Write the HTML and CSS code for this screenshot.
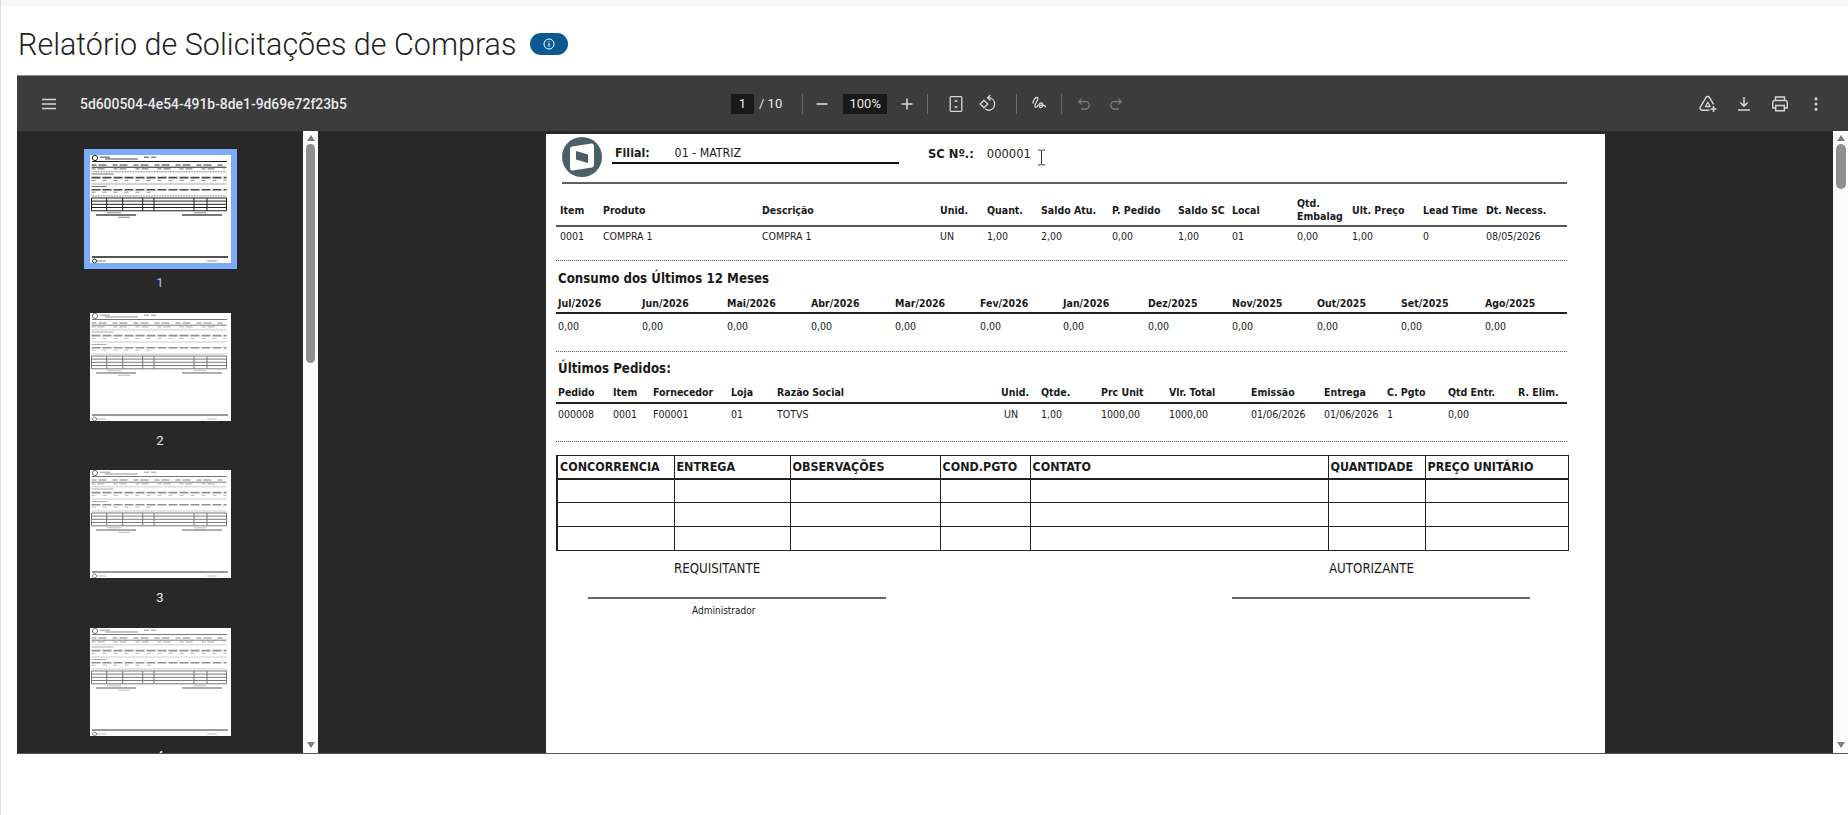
FILE: index.html
```html
<!DOCTYPE html>
<html lang="pt-BR">
<head>
    <meta charset="UTF-8">
    <meta name="viewport" content="width=device-width, initial-scale=1.0">
    <title>Relatório de Solicitações de Compras</title>
    <link rel="stylesheet" href="styles.css">
</head>
<body>
    <svg class="defs" width="0" height="0">
        <symbol id="mini-page" viewBox="0 0 141 108">
            <circle cx="5" cy="3" r="2.6" fill="none" stroke="currentColor" stroke-width="1"/>
            <g fill="none" stroke="currentColor">
                <path d="M10 2.2h10M15 4h33M54 2.2h5M61 2.2h5" stroke-width="1" opacity=".8"/>
                <path d="M2 6.5h135M1.5 12.2h135" stroke-width="1"/>
                <path d="M1.5 10h133" stroke-width="1.4" stroke-dasharray="5 2 8 6" opacity=".6"/>
                <path d="M1.5 13.8h133" stroke-width="1.2" stroke-dasharray="4 2 7 9" opacity=".5"/>
                <path d="M1.5 16.8h135M1.5 29h135M1.5 41h135" stroke-width="1" stroke-dasharray="1 .6" opacity=".6"/>
                <path d="M1.5 19h22M1.5 31.5h15" stroke-width="1.2" opacity=".6"/>
                <path d="M1.5 22.6h135M1.5 34.8h135" stroke-width="1.6" stroke-dasharray="9 2" opacity=".8"/>
                <path d="M1.5 25.4h135M1.5 37.2h60" stroke-width="1" stroke-dasharray="4 7" opacity=".5"/>
                <path d="M1.5 43h135v12.8H1.5zM1.5 46.1h135M1.5 49.3h135M1.5 52.5h135M16.7 43v12.8M32.7 43v12.8M52.7 43v12.8M64 43v12.8M104 43v12.8M117 43v12.8" stroke-width="1"/>
                <path d="M17 57.8h14M104 57.8h12M28 62.3h12" stroke-width="1" opacity=".5"/>
                <path d="M6 60h40M92 60h40" stroke-width="1.3" opacity=".8"/>
                <path d="M2 102h136" stroke-width="1.3"/>
                <path d="M6 106h10M117 106h10" stroke-width="1" opacity=".5"/>
            </g>
            <circle cx="4.5" cy="106" r="2" fill="none" stroke="currentColor" stroke-width=".9"/>
        </symbol>
    </svg>

    <h1 class="page-title">
        Relatório de Solicitações de Compras
        <span class="info-badge">
            <svg width="12" height="12" viewBox="0 0 12 12"><circle cx="6" cy="6" r="5" fill="none" stroke="#fff" stroke-width="1"/><path d="M6 5.3v3.3M6 3.2v1" stroke="#fff" stroke-width="1.2"/></svg>
        </span>
    </h1>

    <div class="viewer">
        <div class="toolbar">
            <div class="tb-left">
                <button class="tb-btn tb-menu">
                    <svg width="18" height="18" viewBox="0 0 18 18"><path d="M2 4.5h14M2 9h14M2 13.5h14" stroke="#d5d7da" stroke-width="1.5"/></svg>
                </button>
                <span class="file-name">5d600504-4e54-491b-8de1-9d69e72f23b5</span>
            </div>
            <div class="tb-center">
                <span class="tb-input page-input">1</span>
                <span class="page-count">/ 10</span>
                <span class="tb-sep sep-pages"></span>
                <button class="tb-btn">
                    <svg width="18" height="18" viewBox="0 0 18 18"><path d="M3.5 9h11" stroke="#d5d7da" stroke-width="1.6"/></svg>
                </button>
                <span class="tb-input zoom-input">100%</span>
                <button class="tb-btn">
                    <svg width="18" height="18" viewBox="0 0 18 18"><path d="M3.5 9h11M9 3.5v11" stroke="#d5d7da" stroke-width="1.6"/></svg>
                </button>
                <span class="tb-sep"></span>
                <button class="tb-btn tb-gap">
                    <svg width="18" height="20" viewBox="0 0 18 20"><rect x="3.2" y="2.7" width="11.6" height="14.6" rx="1" fill="none" stroke="#d5d7da" stroke-width="1.3"/><path d="M9 5.5l2 2.3H7zM9 14.5l2-2.3H7z" fill="#d5d7da"/></svg>
                </button>
                <button class="tb-btn">
                    <svg width="20" height="20" viewBox="0 0 20 20"><path d="M6 6.2l3.800 3.800L6 13.800 2.200 10z" fill="none" stroke="#d5d7da" stroke-width="1.3"/><path d="M9.500 3.700H11a6.400 6.400 0 0 1 0 12.700c-1.500 0-2.700-.5-3.700-1.300" fill="none" stroke="#d5d7da" stroke-width="1.3"/><path d="M12.500 1l-3 2.700 3 2.800" fill="none" stroke="#d5d7da" stroke-width="1.3"/></svg>
                </button>
                <span class="tb-sep sep-tools"></span>
                <button class="tb-btn tb-gap-sm">
                    <svg width="18" height="18" viewBox="0 0 18 18"><path d="M3 8c0-2 2-5.500 3.800-5.500 2 0 1 2.500-.3 4.500-1.200 2-2.300 4.500-1 5.300 1.600.9 3.300-4 5.300-4.300 2-.2 2.700 2 1.700 3.500-1 1.500-2.800 1.500-3 .2-.2-1.300 2-2 3.800-1.500 1 .3 1.700 1 2.200 1.500" fill="none" stroke="#d5d7da" stroke-width="1.3" stroke-linecap="round"/></svg>
                </button>
                <span class="tb-sep sep-draw"></span>
                <button class="tb-btn tb-gap-sm">
                    <svg width="18" height="18" viewBox="0 0 18 18"><path d="M4 6.500h6.500a3.700 3.700 0 0 1 0 7.500H6M6.700 3.500l-3 3 3 3" fill="none" stroke="#76787b" stroke-width="1.4"/></svg>
                </button>
                <button class="tb-btn">
                    <svg width="18" height="18" viewBox="0 0 18 18"><path d="M14 6.500H7.500a3.700 3.700 0 0 0 0 7.500H12M11.300 3.500l3 3-3 3" fill="none" stroke="#76787b" stroke-width="1.4"/></svg>
                </button>
            </div>
            <div class="tb-right">
                <button class="tb-btn wide">
                    <svg width="20" height="20" viewBox="0 0 20 20"><path d="M11.500 16.300H4.200c-1.700 0-2.700-1.800-1.900-3.200l5.600-9.500c.8-1.400 2.900-1.400 3.700 0l4 6.800" fill="none" stroke="#d5d7da" stroke-width="1.4" stroke-linejoin="round"/><path d="M9.800 8.300l2.300 4.200H7.500z" fill="none" stroke="#d5d7da" stroke-width="1.3" stroke-linejoin="round"/><path d="M15.500 12v6M12.500 15h6" stroke="#d5d7da" stroke-width="1.5"/></svg>
                </button>
                <button class="tb-btn wide">
                    <svg width="18" height="18" viewBox="0 0 18 18"><path d="M9 2v9M5.300 7.500L9 11.200l3.700-3.700M3 15h12" fill="none" stroke="#d5d7da" stroke-width="1.5"/></svg>
                </button>
                <button class="tb-btn wide">
                    <svg width="20" height="20" viewBox="0 0 20 20"><path d="M5.500 6.500V3h9v3.500M5.500 14H2.800V8.500c0-1.100.9-2 2-2h10.400c1.100 0 2 .9 2 2V14h-2.700" fill="none" stroke="#d5d7da" stroke-width="1.4"/><path d="M5.700 11.500h8.600v5.300H5.700z" fill="none" stroke="#d5d7da" stroke-width="1.4"/></svg>
                </button>
                <button class="tb-btn wide">
                    <svg width="18" height="18" viewBox="0 0 18 18"><circle cx="9" cy="3.800" r="1.500" fill="#d5d7da"/><circle cx="9" cy="9" r="1.500" fill="#d5d7da"/><circle cx="9" cy="14.200" r="1.500" fill="#d5d7da"/></svg>
                </button>
            </div>
        </div>

        <div class="viewer-body">
            <aside class="thumbs">
                <div class="thumb selected">
                    <svg class="thumb-page" viewBox="0 0 141 108"><use href="#mini-page"/></svg>
                    <span class="thumb-num">1</span>
                </div>
                <div class="thumb">
                    <svg class="thumb-page" viewBox="0 0 141 108"><use href="#mini-page"/></svg>
                    <span class="thumb-num">2</span>
                </div>
                <div class="thumb">
                    <svg class="thumb-page" viewBox="0 0 141 108"><use href="#mini-page"/></svg>
                    <span class="thumb-num">3</span>
                </div>
                <div class="thumb">
                    <svg class="thumb-page" viewBox="0 0 141 108"><use href="#mini-page"/></svg>
                    <span class="thumb-num">4</span>
                </div>
            </aside>
            <div class="scrollbar">
                <span class="arrow-up"></span>
                <span class="scroll-thumb thumbs-scroll"></span>
                <span class="arrow-down"></span>
            </div>

            <main class="doc-area">
                <div class="doc-page">
                    <div class="rep-head">
                        <svg class="logo" width="40" height="40" viewBox="0 0 40 40">
                            <circle cx="20" cy="20" r="20" fill="#4a5f68"/>
                            <path d="M8 12q0-2 2-2.400L29.500 6.500q2.500-.4 2.500 2.500v19q0 2-2 2.400L10.500 33.500Q8 34 8 31z" fill="#fff"/>
                            <path d="M14 14l12 3.500v8.500l-12-3.500z" fill="#4a5f68"/>
                        </svg>
                        <div class="branch">
                            <b>Filial:</b>
                            <span>01 - MATRIZ</span>
                        </div>
                        <div class="sc-number">
                            <b>SC Nº.:</b>
                            <span>000001</span>
                            <svg class="ibeam" width="9" height="17" viewBox="0 0 9 17"><path d="M1 1h2.500l1 1 1-1H8M4.500 2v13M1 16h2.500l1-1 1 1H8" fill="none" stroke="#333" stroke-width="1"/></svg>
                        </div>
                    </div>

                    <div class="row items-cols row-head items-head">
                        <b>Item</b><b>Produto</b><b>Descrição</b><b>Unid.</b><b>Quant.</b><b>Saldo Atu.</b><b>P. Pedido</b><b>Saldo SC</b><b>Local</b><b>Qtd.<br>Embalag</b><b>Ult. Preço</b><b>Lead Time</b><b>Dt. Necess.</b>
                    </div>
                    <div class="row items-cols row-data items-data">
                        <span>0001</span><span>COMPRA 1</span><span>COMPRA 1</span><span>UN</span><span>1,00</span><span>2,00</span><span>0,00</span><span>1,00</span><span>01</span><span>0,00</span><span>1,00</span><span>0</span><span>08/05/2026</span>
                    </div>

                    <h3 class="rep-title usage-title">Consumo dos Últimos 12 Meses</h3>
                    <div class="row usage-cols row-head usage-head">
                        <b>Jul/2026</b><b>Jun/2026</b><b>Mai/2026</b><b>Abr/2026</b><b>Mar/2026</b><b>Fev/2026</b><b>Jan/2026</b><b>Dez/2025</b><b>Nov/2025</b><b>Out/2025</b><b>Set/2025</b><b>Ago/2025</b>
                    </div>
                    <div class="row usage-cols row-data usage-data">
                        <span>0,00</span><span>0,00</span><span>0,00</span><span>0,00</span><span>0,00</span><span>0,00</span><span>0,00</span><span>0,00</span><span>0,00</span><span>0,00</span><span>0,00</span><span>0,00</span>
                    </div>

                    <h3 class="rep-title orders-title">Últimos Pedidos:</h3>
                    <div class="row orders-cols row-head orders-head">
                        <b>Pedido</b><b>Item</b><b>Fornecedor</b><b>Loja</b><b>Razão Social</b><b>Unid.</b><b>Qtde.</b><b>Prc Unit</b><b>Vlr. Total</b><b>Emissão</b><b>Entrega</b><b>C. Pgto</b><b>Qtd Entr.</b><b>R. Elim.</b>
                    </div>
                    <div class="row orders-cols row-data orders-data">
                        <span>000008</span><span>0001</span><span>F00001</span><span>01</span><span>TOTVS</span><span class="un">UN</span><span>1,00</span><span>1000,00</span><span>1000,00</span><span>01/06/2026</span><span>01/06/2026</span><span>1</span><span>0,00</span><span></span>
                    </div>

                    <table class="quote-table">
                        <colgroup>
                            <col class="c1"><col class="c2"><col class="c3"><col class="c4"><col class="c5"><col class="c6"><col class="c7">
                        </colgroup>
                        <thead>
                            <tr><th>CONCORRENCIA</th><th>ENTREGA</th><th>OBSERVAÇÕES</th><th>COND.PGTO</th><th>CONTATO</th><th>QUANTIDADE</th><th>PREÇO UNITÁRIO</th></tr>
                        </thead>
                        <tbody>
                            <tr><td></td><td></td><td></td><td></td><td></td><td></td><td></td></tr>
                            <tr><td></td><td></td><td></td><td></td><td></td><td></td><td></td></tr>
                            <tr><td></td><td></td><td></td><td></td><td></td><td></td><td></td></tr>
                        </tbody>
                    </table>

                    <div class="signatures">
                        <div class="sign sign-req">
                            <div class="sign-role">REQUISITANTE</div>
                            <div class="sign-line"></div>
                            <div class="sign-name">Administrador</div>
                        </div>
                        <div class="sign sign-auth">
                            <div class="sign-role">AUTORIZANTE</div>
                            <div class="sign-line"></div>
                        </div>
                    </div>
                </div>
            </main>
            <div class="scrollbar">
                <span class="arrow-up"></span>
                <span class="scroll-thumb doc-scroll"></span>
                <span class="arrow-down"></span>
            </div>
        </div>
    </div>
</body>
</html>
```

FILE: styles.css
```css
* {
    box-sizing: border-box;
}
html, body {
    height: 100%;
    overflow: hidden;
}
body {
    margin: 0;
    padding-top: 6px;
    background-color: #fff;
    border-left: 1px solid #ddd;
    font-family: Roboto, Arial, sans-serif;
}
body::before {
    content: "";
    display: block;
    height: 6px;
    margin-top: -6px;
    background-color: #f7f7f7;
}
.defs {
    display: block;
    height: 0;
}
.page-title {
    display: flex;
    align-items: center;
    height: 69px;
    margin: 0;
    padding: 7px 0 0 17px;
    font-family: Roboto, sans-serif;
    font-size: 30.5px;
    font-weight: 300;
    color: #222;
}
.info-badge {
    display: flex;
    align-items: center;
    justify-content: center;
    width: 38px;
    height: 22px;
    margin-left: 14px;
    border-radius: 11px;
    background-color: #0b5a91;
}
.viewer {
    height: 679px;
    margin-left: 16px;
    display: flex;
    flex-direction: column;
    border-bottom: 1px solid #555;
}
.toolbar {
    display: flex;
    align-items: center;
    height: 56px;
    flex-shrink: 0;
    background-color: #3c3c3c;
    border-top: 1px solid #8a8a8a;
}
.tb-left {
    display: flex;
    align-items: center;
    width: 714px;
    padding-left: 16px;
}
.tb-menu {
    margin-right: 15px;
}
.file-name {
    font-size: 13.9px;
    font-weight: 500;
    color: #e8eaed;
}
.tb-center {
    display: flex;
    align-items: center;
}
.tb-btn {
    display: flex;
    align-items: center;
    justify-content: center;
    width: 32px;
    height: 32px;
    padding: 0;
    border: none;
    background: none;
}
.tb-btn.wide {
    width: 36px;
}
.tb-input {
    display: flex;
    align-items: center;
    justify-content: center;
    height: 20px;
    background-color: #191919;
    font-size: 13px;
    color: #e8eaed;
}
.page-input {
    width: 23px;
}
.page-count {
    margin-left: 5px;
    font-size: 13px;
    color: #e8eaed;
}
.zoom-input {
    width: 44px;
    margin: 0 4px 0 5px;
}
.tb-sep {
    width: 1px;
    height: 20px;
    margin-left: 4px;
    background-color: #6a6a6a;
}
.tb-sep.sep-pages {
    margin-left: 20px;
    margin-right: 3px;
}
.tb-sep.sep-tools {
    margin-left: 12px;
}
.tb-sep.sep-draw {
    margin-left: 6px;
}
.tb-gap {
    margin-left: 12px;
}
.tb-gap-sm {
    margin-left: 6px;
}
.tb-right {
    display: flex;
    margin-left: auto;
    padding-right: 14px;
}
.viewer-body {
    display: flex;
    flex: 1;
    min-height: 0;
    background-color: #282828;
}
.thumbs {
    width: 286px;
    flex-shrink: 0;
    padding-top: 18px;
    overflow: hidden;
    display: flex;
    flex-direction: column;
    align-items: center;
}
.thumb {
    display: flex;
    flex-direction: column;
    align-items: center;
    flex-shrink: 0;
    height: 157.5px;
    color: #777;
}
.thumb-page {
    display: block;
    box-sizing: content-box;
    width: 141px;
    height: 108px;
    background-color: #fff;
    border: 6px solid transparent;
    background-clip: padding-box;
}
.thumb-page use {
    filter: blur(.5px);
}
.thumb.selected {
    color: #1c1c1c;
}
.thumb.selected .thumb-page {
    border-color: #7cacf8;
}
.thumb-num {
    height: 28px;
    line-height: 28px;
    font-size: 13px;
    color: #e8eaed;
}
.thumb.selected .thumb-num {
    color: #a8c7fa;
}
.scrollbar {
    display: flex;
    flex-direction: column;
    align-items: center;
    width: 15px;
    flex-shrink: 0;
    background-color: #fbfbfb;
    padding-top: 4px;
    padding-bottom: 5px;
}
.arrow-up {
    width: 0;
    height: 0;
    border: 4.5px solid transparent;
    border-top: none;
    border-bottom: 6px solid #808080;
}
.arrow-down {
    width: 0;
    height: 0;
    margin-top: auto;
    border: 4.5px solid transparent;
    border-bottom: none;
    border-top: 6px solid #808080;
}
.scroll-thumb {
    width: 9px;
    margin-top: 3px;
    border-radius: 5px;
    background-color: #8f8f8f;
}
.thumbs-scroll {
    height: 219px;
}
.doc-scroll {
    width: 10px;
    height: 45px;
}
.doc-area {
    flex: 1;
    min-width: 0;
    overflow: hidden;
    padding: 3px 0 0 228px;
}
.doc-page {
    width: 1059px;
    height: 700px;
    padding: 0 38px 0 10px;
    background-color: #fff;
    font-family: "DejaVu Sans", Tahoma, sans-serif;
    font-stretch: condensed;
    font-size: 10.5px;
    color: #1a1a1a;
}
.rep-head {
    display: flex;
    align-items: flex-start;
    height: 50px;
    margin-left: 6px;
    border-bottom: 2px solid #5f5f5f;
}
.logo {
    margin-top: 3px;
    flex-shrink: 0;
}
.branch {
    display: flex;
    align-items: center;
    width: 287px;
    height: 21px;
    margin-top: 9px;
    margin-left: 10px;
    padding-left: 3px;
    border-bottom: 2px solid #111;
    font-size: 12.3px;
}
.branch span {
    margin-left: 25px;
}
.sc-number {
    display: flex;
    align-items: center;
    height: 20px;
    margin-top: 9px;
    margin-left: 29px;
    font-size: 12.8px;
}
.sc-number span {
    margin-left: 13px;
}
.ibeam {
    margin-left: 6px;
    margin-top: 9px;
}
.row {
    display: grid;
    align-items: center;
}
.row-head {
    line-height: 13px;
    border-bottom: 2px solid #222;
}
.items-cols {
    padding-left: 4px;
    grid-template-columns: 43px 159px 178px 47px 54px 71px 66px 54px 65px 55px 71px 63px 81px;
}
.items-head {
    height: 32px;
    margin-top: 11px;
    border-bottom-color: #555;
}
.items-data {
    height: 34px;
    padding-bottom: 16px;
    border-bottom: 1px dotted #555;
}
.usage-cols {
    padding-left: 2px;
    grid-template-columns: 84px 85px 84px 84px 85px 83px 85px 84px 85px 84px 84px 1fr;
}
.usage-head {
    height: 19px;
    padding-bottom: 1px;
}
.usage-data {
    height: 38px;
    padding-bottom: 14px;
    border-bottom: 1px dotted #555;
}
.rep-title {
    margin: 0;
    display: flex;
    align-items: center;
    padding-left: 2px;
    font-size: 13.2px;
    font-weight: bold;
}
.usage-title {
    height: 34px;
}
.orders-title {
    height: 32px;
}
.orders-cols {
    padding-left: 2px;
    grid-template-columns: 55px 40px 78px 46px 224px 40px 60px 68px 82px 73px 63px 61px 70px 1fr;
}
.orders-head {
    height: 20px;
    padding-bottom: 2px;
}
.orders-data {
    height: 38px;
    padding-bottom: 17px;
    border-bottom: 1px dotted #555;
}
.un {
    padding-left: 3px;
}
.quote-table {
    width: 1011px;
    margin-top: 13px;
    table-layout: fixed;
    border-collapse: collapse;
    border-left: 2px solid #222;
    font-size: 12.4px;
}
.quote-table th,
.quote-table td {
    border: 1px solid #222;
    padding: 0 0 0 2px;
    text-align: left;
}
.quote-table th {
    height: 23px;
    border-bottom-width: 2px;
    white-space: nowrap;
}
.quote-table td {
    height: 24px;
}
.c1 { width: 117px; }
.c2 { width: 116px; }
.c3 { width: 150px; }
.c4 { width: 90px; }
.c5 { width: 298px; }
.c6 { width: 97px; }
.c7 { width: 143px; }
.signatures {
    display: flex;
    margin-top: 8px;
}
.sign {
    width: 298px;
    font-size: 13.2px;
}
.sign-req {
    margin-left: 32px;
}
.sign-auth {
    margin-left: 346px;
}
.sign-role {
    height: 20px;
    line-height: 20px;
}
.sign-req .sign-role {
    padding-left: 86px;
}
.sign-auth .sign-role {
    padding-left: 97px;
}
.sign-line {
    height: 2px;
    margin-top: 18px;
    background-color: #666;
}
.sign-name {
    margin-top: 6px;
    padding-left: 104px;
    font-size: 10px;
}
```
